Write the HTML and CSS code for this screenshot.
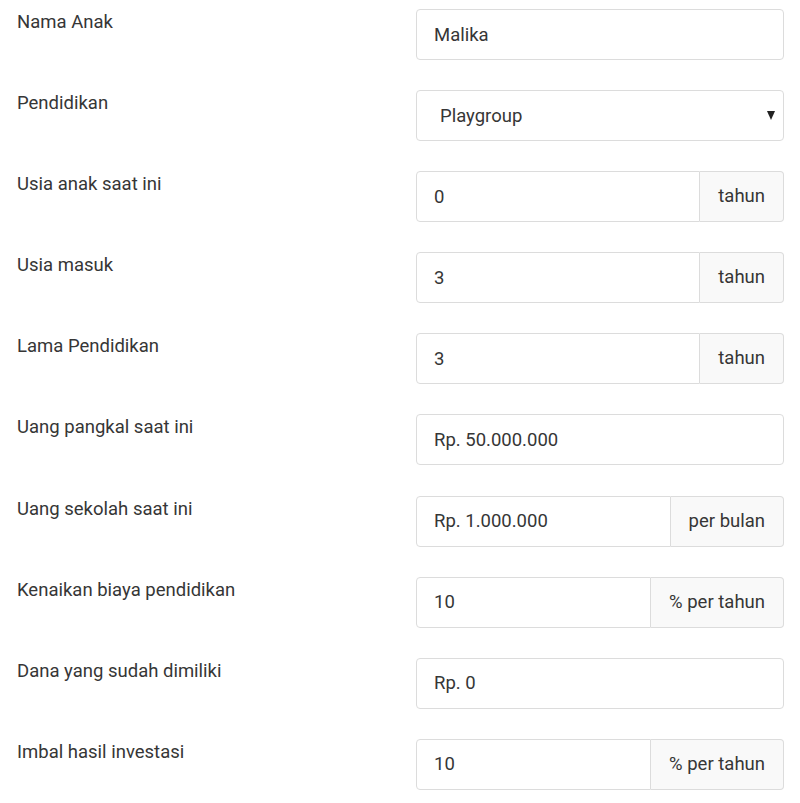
FILE: index.html
```html
<!DOCTYPE html>
<html lang="id">
<head>
<meta charset="utf-8">
<title>Kalkulator Dana Pendidikan</title>
<link rel="stylesheet" href="styles.css">
</head>
<body>
<form class="form">
  <label class="label" for="nama">Nama Anak</label>
  <div class="field"><input class="control" id="nama" type="text" value="Malika"></div>

  <label class="label" for="pend">Pendidikan</label>
  <div class="field select-wrap">
    <select class="control select" id="pend"><option>Playgroup</option></select>
  </div>

  <label class="label" for="usia">Usia anak saat ini</label>
  <div class="field group"><input class="control" id="usia" type="text" value="0"><span class="addon">tahun</span></div>

  <label class="label" for="masuk">Usia masuk</label>
  <div class="field group"><input class="control" id="masuk" type="text" value="3"><span class="addon">tahun</span></div>

  <label class="label" for="lama">Lama Pendidikan</label>
  <div class="field group"><input class="control" id="lama" type="text" value="3"><span class="addon">tahun</span></div>

  <label class="label" for="pangkal">Uang pangkal saat ini</label>
  <div class="field"><input class="control" id="pangkal" type="text" value="Rp. 50.000.000"></div>

  <label class="label" for="sekolah">Uang sekolah saat ini</label>
  <div class="field group"><input class="control" id="sekolah" type="text" value="Rp. 1.000.000"><span class="addon">per bulan</span></div>

  <label class="label" for="naik">Kenaikan biaya pendidikan</label>
  <div class="field group"><input class="control" id="naik" type="text" value="10"><span class="addon">% per tahun</span></div>

  <label class="label" for="dana">Dana yang sudah dimiliki</label>
  <div class="field"><input class="control" id="dana" type="text" value="Rp. 0"></div>

  <label class="label" for="imbal">Imbal hasil investasi</label>
  <div class="field group"><input class="control" id="imbal" type="text" value="10"><span class="addon">% per tahun</span></div>
</form>
</body>
</html>
```

FILE: styles.css
```css
* { box-sizing: border-box; }

html, body {
  margin: 0;
  background: #ffffff;
}

body {
  font-family: Roboto, "Liberation Sans", Arial, sans-serif;
  font-size: 18.5px;
  line-height: 27px;
  color: #363636;
}

.form {
  display: grid;
  grid-template-columns: 399px 368px;
  row-gap: 30.1px;
  padding: 9px 16px 0 17px;
  align-items: start;
}

.label {
  display: block;
  color: #363636;
}

.field {
  display: flex;
  height: 51px;
}

.control {
  flex: 1 1 auto;
  min-width: 0;
  height: 51px;
  margin: 0;
  padding: 0 17px;
  font-family: Roboto, "Liberation Sans", Arial, sans-serif;
  font-size: 18.5px;
  color: #363636;
  background: #ffffff;
  border: 1px solid #dcdcdc;
  border-radius: 4px;
  outline: none;
}

.select-wrap {
  position: relative;
}

.select {
  -webkit-appearance: none;
  appearance: none;
  padding-left: 23px;
  width: 100%;
}

.select-wrap::after {
  content: "";
  position: absolute;
  right: 9px;
  top: 21px;
  width: 0;
  height: 0;
  border-left: 4.5px solid transparent;
  border-right: 4.5px solid transparent;
  border-top: 9px solid #222222;
  pointer-events: none;
}

.group .control {
  border-top-right-radius: 0;
  border-bottom-right-radius: 0;
}

.addon {
  display: flex;
  align-items: center;
  padding: 0 18px;
  white-space: nowrap;
  background: #f9f9f9;
  border: 1px solid #dcdcdc;
  border-left: 0;
  border-radius: 0 4px 4px 0;
  color: #363636;
}
```
